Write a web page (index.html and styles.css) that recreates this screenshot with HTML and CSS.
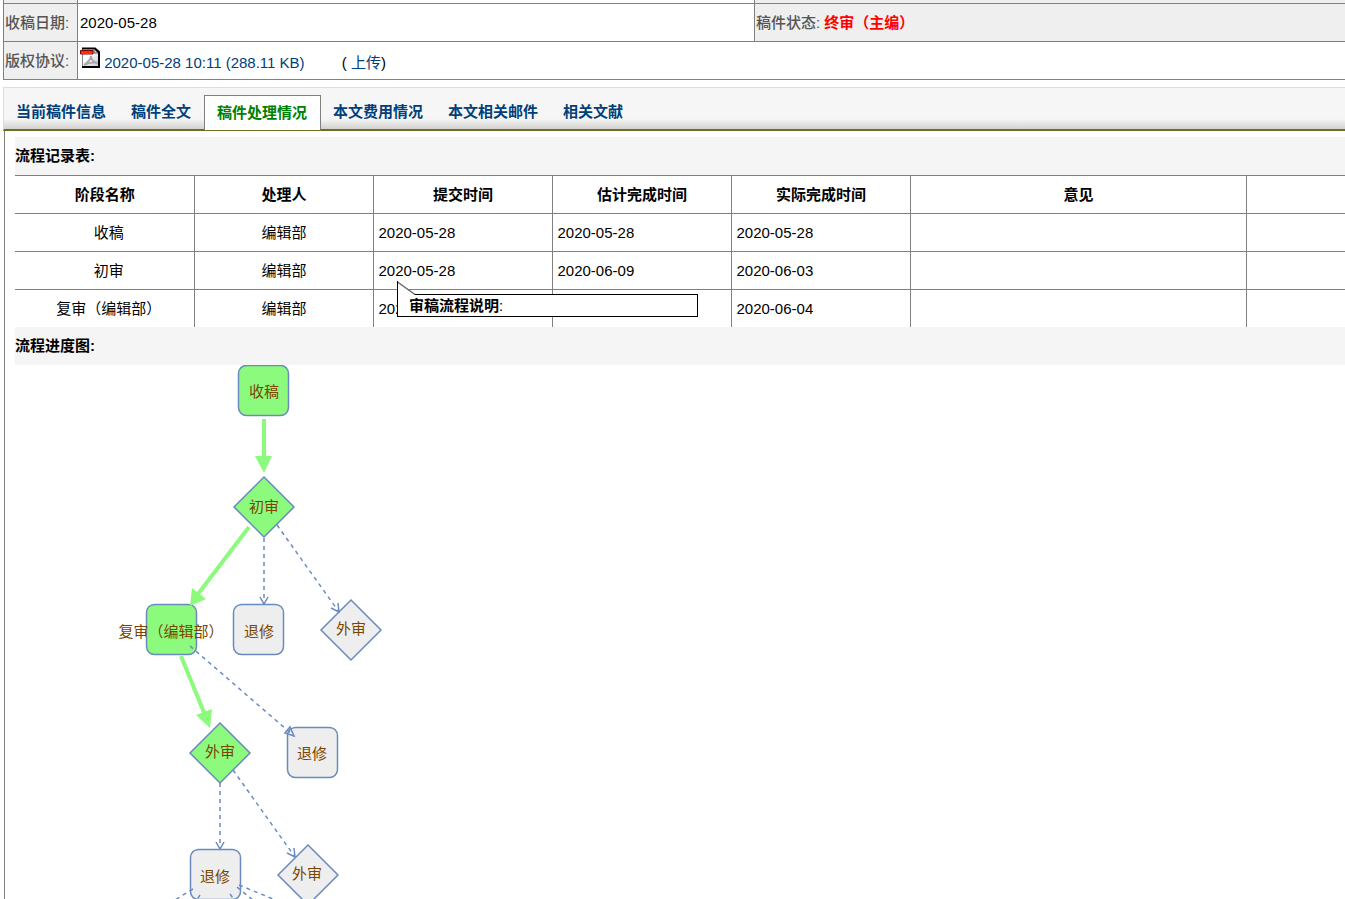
FILE: index.html
```html
<!DOCTYPE html>
<html lang="zh-CN">

<head>
  <meta charset="UTF-8">
  <meta name="viewport" content="width=device-width, initial-scale=1.0">
  <title>稿件处理情况</title>
  <link rel="stylesheet" href="styles.css">
</head>

<body>

  <table class="info">
    <colgroup>
      <col class="col-label">
      <col class="col-value">
      <col>
    </colgroup>
    <tr class="info-cut">
      <th></th>
      <td></td>
      <td class="status"></td>
    </tr>
    <tr>
      <th scope="row">收稿日期:</th>
      <td>2020-05-28</td>
      <td class="status">稿件状态: <span class="red">终审（主编）</span></td>
    </tr>
    <tr>
      <th scope="row">版权协议:</th>
      <td class="files" colspan="2">
        <svg class="pdf" width="20" height="22" viewBox="0 0 20 22" aria-hidden="true">
          <defs>
            <linearGradient id="paper" x1="0" y1="0" x2="1" y2="1">
              <stop offset="0.4" stop-color="#fff"/>
              <stop offset="1" stop-color="#b4c4dc"/>
            </linearGradient>
          </defs>
          <path d="M2.5 1.5H15L19 5V20H2.5Z" fill="url(#paper)" stroke="#888"/>
          <path d="M2 1.5H15L19 5V20H2" fill="none" stroke="#000" stroke-width="2"/>
          <path d="M14 2V6H18Z" fill="#ddd" stroke="#555"/>
          <path d="M4 18C8 15 11 12 11 9C11 12 13 15 18 16C13 15 8 16 4 18" fill="none" stroke="#aaa" stroke-width="2"/>
          <path d="M0.5 3.5H13V7H0.5Z" fill="#ff3000" stroke="#700"/>
          <path d="M1 4H12V7H1Z" fill="#ff3000"/>
        </svg>
        <a href="#">2020-05-28 10:11 (288.11 KB)</a>
        <span class="upload">( <a href="#">上传</a>)</span>
      </td>
    </tr>
  </table>

  <nav class="tabs">
    <a href="#">当前稿件信息</a>
    <a href="#">稿件全文</a>
    <a href="#" class="active">稿件处理情况</a>
    <a href="#">本文费用情况</a>
    <a href="#">本文相关邮件</a>
    <a href="#">相关文献</a>
  </nav>

  <main class="panel">
    <h2>流程记录表:</h2>
    <div class="record-box">
      <table class="records">
        <colgroup>
          <col class="col-normal" span="5">
          <col class="col-opinion">
          <col>
        </colgroup>
        <tr>
          <th>阶段名称</th>
          <th>处理人</th>
          <th>提交时间</th>
          <th>估计完成时间</th>
          <th>实际完成时间</th>
          <th>意见</th>
          <th></th>
        </tr>
        <tr>
          <td class="stage">收稿</td>
          <td class="person">编辑部</td>
          <td>2020-05-28</td>
          <td>2020-05-28</td>
          <td>2020-05-28</td>
          <td></td>
          <td></td>
        </tr>
        <tr>
          <td class="stage">初审</td>
          <td class="person">编辑部</td>
          <td>2020-05-28</td>
          <td>2020-06-09</td>
          <td>2020-06-03</td>
          <td></td>
          <td></td>
        </tr>
        <tr>
          <td class="stage">复审（编辑部）</td>
          <td class="person">编辑部</td>
          <td>2020-06-03</td>
          <td></td>
          <td>2020-06-04</td>
          <td></td>
          <td></td>
        </tr>
      </table>
      <div class="tip">
        <svg class="tip-arrow" width="20" height="15" viewBox="0 0 20 15" aria-hidden="true">
          <path d="M0.5 0V15H19Z" fill="#fff"/>
          <path d="M0.5 1L18 13.5" fill="none" stroke="#666" stroke-width="1.5"/>
          <path d="M0.5 15V0" fill="none" stroke="#000"/>
        </svg>
        <b>审稿流程说明</b>:
      </div>
    </div>

    <h2>流程进度图:</h2>
    <div class="flow">
      <svg width="500" height="620">
        <!-- 节点 -->
        <g class="node done">
          <rect x="223.5" y="0.5" width="50" height="50" rx="8"/>
          <path d="M249 112L279 142L249 172L219 142Z"/>
          <rect x="131.5" y="239.5" width="50" height="50" rx="8"/>
          <path d="M205 358L235 388L205 418L175 388Z"/>
        </g>
        <g class="node">
          <rect x="218.5" y="239.5" width="50" height="50" rx="8"/>
          <path d="M336 235L366 265L336 295L306 265Z"/>
          <rect x="272.5" y="362.5" width="50" height="50" rx="8"/>
          <rect x="175.5" y="484.5" width="50" height="50" rx="8"/>
          <path d="M293 480L323 510L293 540L263 510Z"/>
        </g>
        <!-- 已完成路径 -->
        <g class="path-done">
          <path d="M249 54V92M234 162L183 229M166 291L190 350"/>
          <polygon points="240,91 257,91 249,108"/>
          <polygon points="175,241 177,223 191,234"/>
          <polygon points="181,350 197,344 195,363"/>
        </g>
        <!-- 可选路径 -->
        <g class="path-next">
          <path d="M249 173V239M262 160L324 247M175 281L279 371M205 418V484M218 405L280 492"/>
          <path d="M178 524L150 541M185 530L178 541M215 529L224 541M222 522L245 541M224 520L275 541"/>
        </g>
        <g class="path-head">
          <path d="M245 232L249 239L253 232M316 243L324 247L323 238M270 368L279 371L275 362Z"/>
          <path d="M201 477L205 484L209 477M272 488L280 492L279 483"/>
        </g>
        <g class="node-text">
          <text x="249" y="32">收稿</text>
          <text x="249" y="147">初审</text>
          <text x="156" y="272">复审（编辑部）</text>
          <text x="244" y="272">退修</text>
          <text x="336" y="269">外审</text>
          <text x="205" y="392">外审</text>
          <text x="297" y="394">退修</text>
          <text x="200" y="517">退修</text>
          <text x="292" y="514">外审</text>
        </g>
      </svg>
    </div>
  </main>

</body>

</html>
```
FILE: styles.css
```css
body {
  margin: 0;
  padding-left: 3px;
  height: 100vh;
  box-sizing: border-box;
  display: flex;
  flex-direction: column;
  overflow: hidden;
  background-color: #fff;
  color: #000;
  font-family: "Liberation Sans", Arial, "Noto Sans CJK SC", sans-serif;
  font-size: 15px;
  line-height: 20px;
}

a {
  color: #00407a;
  text-decoration: none;
}

table {
  width: 100%;
  border-collapse: collapse;
  table-layout: fixed;
}

/* 稿件信息 */
.info {
  border-bottom: 1px solid #808080;
}

.info tr {
  height: 38px;
}

.info .info-cut {
  height: 3px;
}

.info th,
.info td {
  padding: 2px 2px 0;
  border: 1px solid #808080;
  border-right: none;
  text-align: left;
}

.info .files {
  padding-top: 0;
}

.info .info-cut th,
.info .info-cut td {
  padding-top: 0;
  border-top: none;
}

.info th,
.info .status {
  padding-left: 1px;
  padding-right: 1px;
  background-color: #efefef;
  color: #555;
  font-weight: 500;
}

.col-label {
  width: 74px;
}

.col-value {
  width: 677px;
}

.red {
  color: #f00;
  font-weight: bold;
}

.pdf {
  vertical-align: -1px;
}

.upload {
  margin-left: 33px;
}

/* 标签页 */
.tabs {
  display: flex;
  align-items: flex-end;
  height: 41px;
  flex-shrink: 0;
  margin-top: 7px;
  border-top: 1px solid #ddd;
  border-left: 1px solid #ddd;
  border-bottom: 2px solid #6b6f1e;
  background: linear-gradient(#f6f6f6 75%, #d2d3cf);
}

.tabs a {
  padding: 0 13px 0 12px;
  line-height: 34px;
  font-weight: bold;
}

.tabs .active {
  margin-bottom: -1px;
  border: 1px solid #808080;
  border-bottom: none;
  background-color: #fff;
  color: #008000;
}

.panel {
  flex: 1;
  display: flex;
  flex-direction: column;
  min-height: 0;
  margin-left: 1px;
  padding: 6px 0 0 10px;
  border-left: 1px solid #808080;
}

h2 {
  flex-shrink: 0;
  margin: 0;
  background-color: #f5f5f5;
  font-size: 15px;
  line-height: 38px;
}

/* 流程记录表 */
.record-box {
  position: relative;
}

.records tr {
  height: 38px;
}

.records th,
.records td {
  padding: 2px 4px 0 5px;
  border-top: 1px solid #808080;
  border-right: 1px solid #808080;
}

.records th:last-child,
.records td:last-child {
  border-right: none;
}

.records .stage {
  padding-left: 13px;
  text-align: center;
}

.records .person {
  text-align: center;
}

.col-normal {
  width: 179px;
}

.col-opinion {
  width: 336px;
}

.tip {
  position: absolute;
  top: 119px;
  left: 382px;
  width: 288px;
  padding-left: 11px;
  border: 1px solid #000;
  background-color: #fff;
  line-height: 21px;
}

.tip-arrow {
  position: absolute;
  top: -14px;
  left: -1px;
}

/* 流程图 */
.flow {
  flex: 1;
  min-height: 0;
  overflow: hidden;
}

.node {
  fill: #eee;
  stroke: #6a8abf;
  stroke-width: 1.5;
}

.done {
  fill: #8cfa7d;
}

.path-done {
  fill: #8cfa7d;
}

.path-done path {
  stroke: #8cfa7d;
  stroke-width: 4;
}

.path-next {
  fill: none;
  stroke: #6a8abf;
  stroke-width: 1.5;
  stroke-dasharray: 4 4;
}

.path-head {
  fill: none;
  stroke: #6a8abf;
  stroke-width: 1.5;
}

.node-text {
  fill: #7a4500;
  text-anchor: middle;
}
```
